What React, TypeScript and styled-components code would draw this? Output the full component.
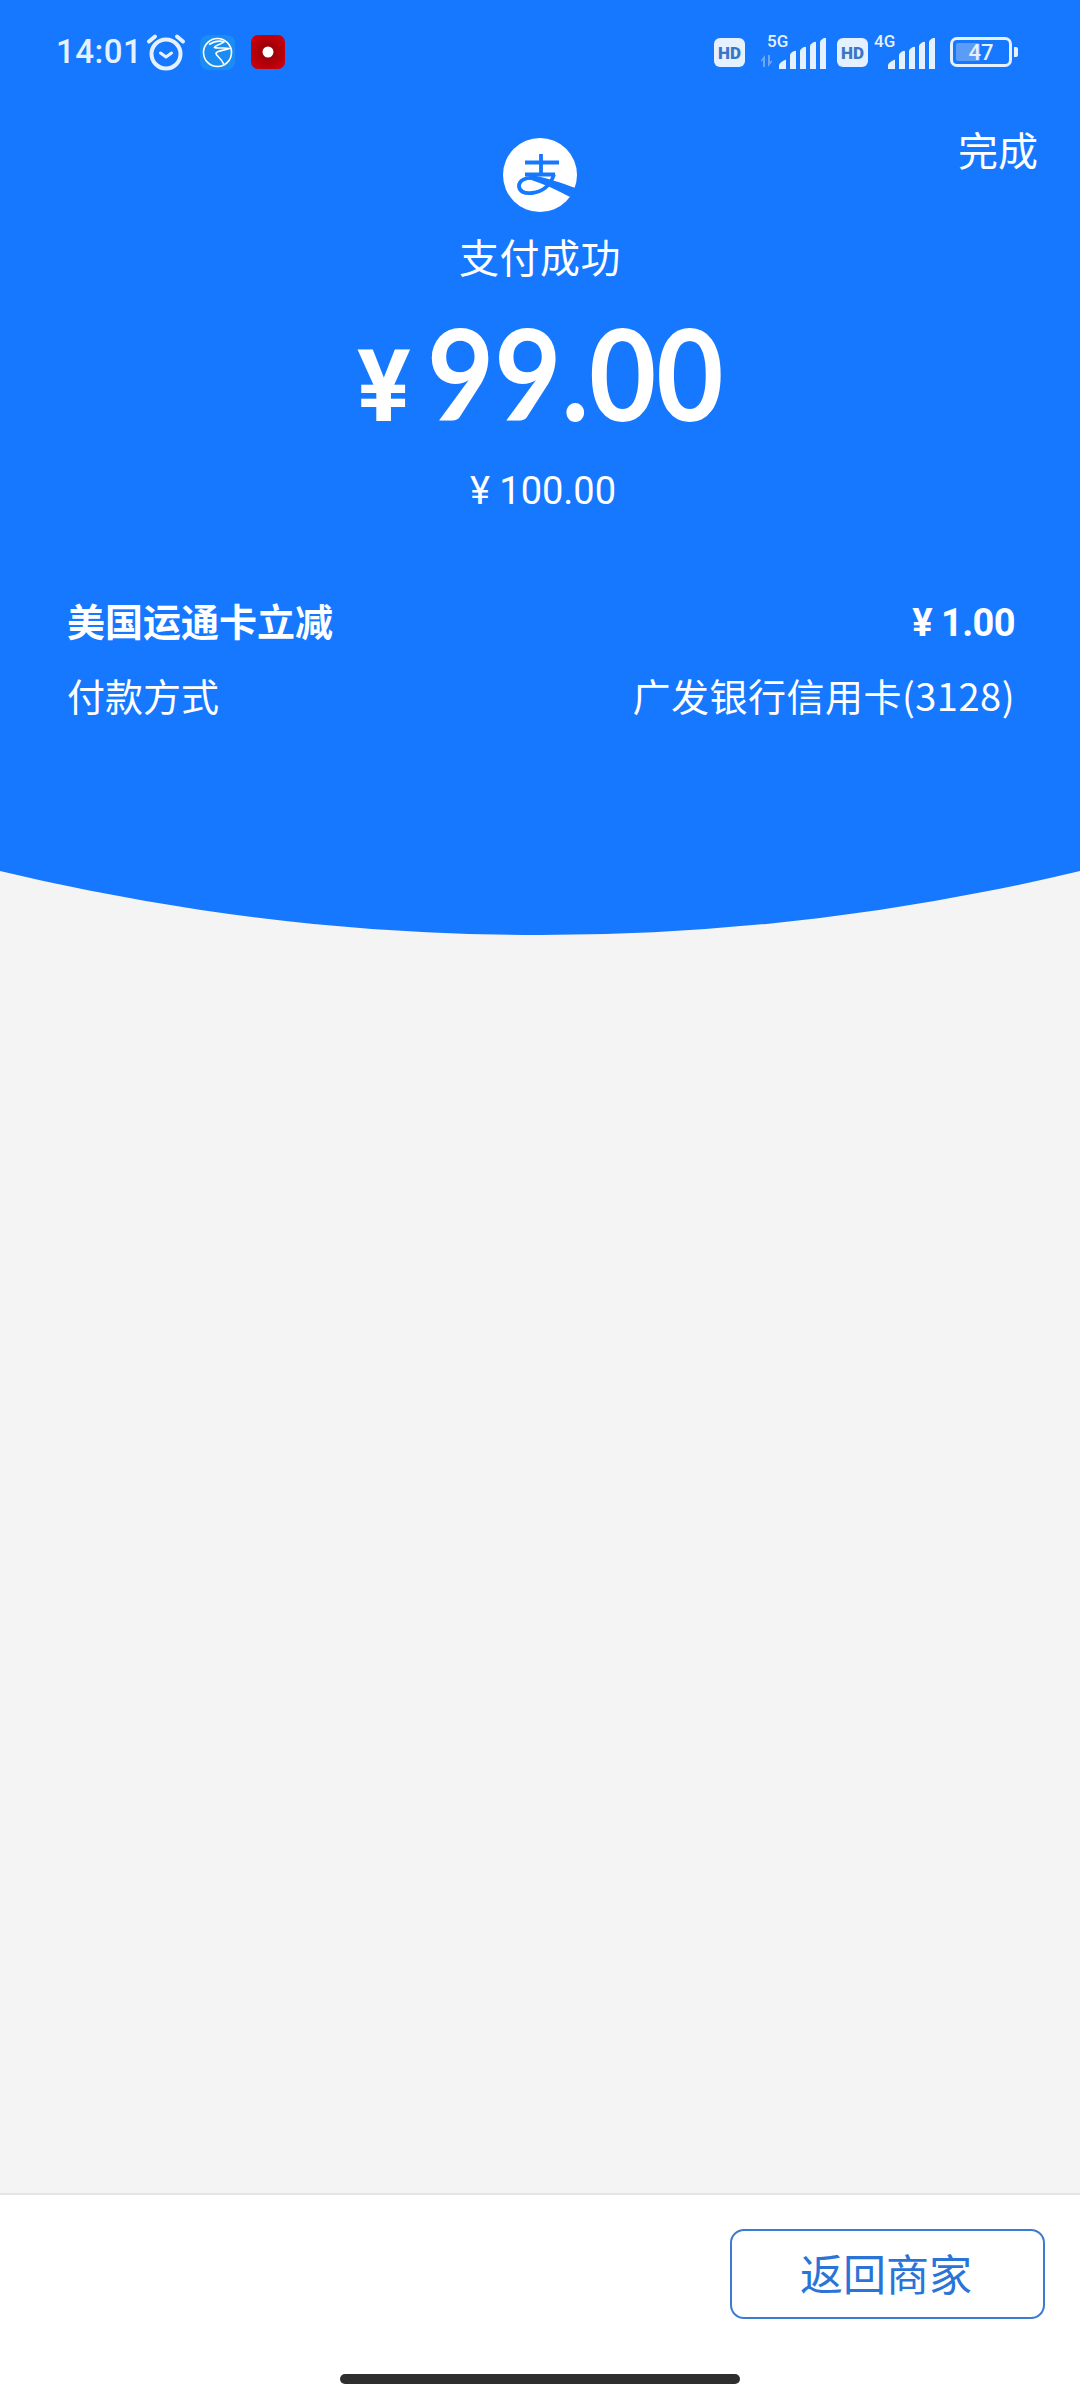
import React from 'react';
import styled, { createGlobalStyle } from 'styled-components';

const blue = '#1677ff';
const sans = `Roboto, "Noto Sans CJK SC", sans-serif`;
const cjk = `"Noto Sans CJK SC", sans-serif`;

const GlobalStyle = createGlobalStyle`
  html, body {
    margin: 0;
    padding: 0;
    background: #f4f4f4;
  }
  * {
    box-sizing: border-box;
  }
`;

const Page = styled.div`
  width: 1080px;
  height: 2400px;
  display: flex;
  flex-direction: column;
  background: #f4f4f4;
  overflow: hidden;
  font-family: ${sans};
  color: #fff;
`;

const Hero = styled.section`
  height: 935px;
  flex: none;
  display: flex;
  flex-direction: column;
  background: ${blue};
  clip-path: circle(2310px at 50% -1375px);
`;

const StatusBar = styled.div`
  height: 104px;
  flex: none;
  display: flex;
  align-items: center;
  justify-content: space-between;
  padding: 0 62px 0 56px;
`;

const StatusGroup = styled.div`
  display: flex;
  align-items: center;
`;

const Time = styled.span`
  font-size: 33px;
  line-height: 40px;
  font-weight: 500;
  letter-spacing: 0.5px;
  color: #e6f1ff;
  margin-right: 4px;
`;

const AppBadge = styled.span<{ $left?: number }>`
  display: flex;
  margin-left: ${(p) => p.$left ?? 0}px;
`;

const SignalWrap = styled.div<{ $left: number }>`
  position: relative;
  width: 66px;
  height: 34px;
  margin-left: ${(p) => p.$left}px;
`;

const NetLabel = styled.span<{ $x: number }>`
  position: absolute;
  left: ${(p) => p.$x}px;
  top: -3px;
  font-size: 17px;
  line-height: 18px;
  font-weight: 500;
  color: #e6f1ff;
`;

const Battery = styled.div`
  width: 62px;
  height: 30px;
  margin-left: 14px;
  border: 3px solid #e6f1ff;
  border-radius: 7px;
  padding: 3px;
  position: relative;
  display: flex;
`;

const BatteryFill = styled.div`
  height: 100%;
  border-radius: 2px;
  background: #5b9cf6;
`;

const BatteryText = styled.span`
  position: absolute;
  inset: 0;
  display: flex;
  align-items: center;
  justify-content: center;
  font-size: 22px;
  font-weight: 500;
  color: #e6f1ff;
`;

const BatteryTip = styled.div`
  width: 4px;
  height: 10px;
  margin-left: 2px;
  border-radius: 0 2px 2px 0;
  background: #e6f1ff;
`;

const TopRow = styled.div`
  display: grid;
  grid-template-columns: 1fr 74px 1fr;
  padding-top: 34px;
  align-items: start;
`;

const Logo = styled.svg`
  display: block;
  width: 74px;
  height: 74px;
`;

const Done = styled.span`
  justify-self: end;
  margin: -18px 42px 0 0;
  font-family: ${cjk};
  font-size: 40px;
  line-height: 58px;
`;

const Title = styled.div`
  margin-top: 15px;
  text-align: center;
  font-family: ${cjk};
  font-size: 40px;
  line-height: 58px;
  letter-spacing: 0.5px;
`;

const Amount = styled.div`
  margin-top: 32px;
  height: 112px;
  display: flex;
  justify-content: center;
  align-items: baseline;
  line-height: 112px;
`;

const AmountSign = styled.span`
  font-size: 100px;
  font-weight: 700;
  margin-right: 16px;
`;

const AmountValue = styled.span`
  font-family: Lato, sans-serif;
  font-size: 126px;
  font-weight: 700;
  transform: scaleX(0.92);
  transform-origin: left center;
  margin-right: -26px;
`;

const Original = styled.div`
  margin-top: 37px;
  padding-left: 6px;
  text-align: center;
  font-size: 38px;
  line-height: 50px;
`;

const Details = styled.div`
  margin-top: 81px;
  padding: 0 65px 0 67px;
  display: flex;
  flex-direction: column;
  gap: 18px;
`;

const DetailRow = styled.div<{ $strong?: boolean }>`
  display: flex;
  justify-content: space-between;
  align-items: center;
  font-family: ${(p) => (p.$strong ? sans : cjk)};
  font-size: 38px;
  line-height: 53px;
  font-weight: ${(p) => (p.$strong ? 700 : 400)};
`;

const Discount = styled.span`
  letter-spacing: -0.6px;
`;

const CardName = styled.span`
  letter-spacing: 0.5px;
`;

const Body = styled.main`
  flex: 1;
`;

const Footer = styled.footer`
  height: 207px;
  flex: none;
  display: flex;
  flex-direction: column;
  background: #fff;
  border-top: 2px solid #e4e4e4;
`;

const FooterActions = styled.div`
  display: flex;
  justify-content: flex-end;
  padding: 34px 35px 0 0;
`;

const BackButton = styled.button`
  width: 315px;
  height: 90px;
  padding: 0 3px 4px 0;
  background: #fff;
  border: 2px solid #3b7bd0;
  border-radius: 14px;
  color: #2a74d8;
  font-family: ${cjk};
  font-size: 43px;
`;

const HomeBar = styled.div`
  width: 400px;
  height: 10px;
  margin: 55px auto 0;
  border-radius: 5px;
  background: #2e2e2e;
`;

const ActivityArrows = styled.svg`
  position: absolute;
  left: 0;
  bottom: 2px;
`;

const BarsSlot = styled.span`
  position: absolute;
  right: 0;
  bottom: 0;
  display: flex;
`;

const Alarm = () => (
  <svg width="40" height="38" viewBox="0 0 40 38" fill="none" stroke="#e6f1ff" strokeLinecap="round" strokeLinejoin="round">
    <circle cx="20" cy="21" r="14.5" strokeWidth="4" />
    <path d="M14.5 20l5.500 4 5.500-4" strokeWidth="3" />
    <path d="M3 8.500L9 3.500M37 8.500L31 3.500" strokeWidth="4" />
  </svg>
);

const GlobeApp = () => (
  <svg width="35" height="35" viewBox="0 0 35 35" fill="none">
    <rect width="35" height="35" rx="8" fill="#1b8cf2" />
    <circle cx="17.500" cy="17.500" r="14" stroke="#fff" strokeWidth="1.600" />
    <path d="M9 9.500c5-3 11-4 15-2.500-3 2.500-9 3-9.500 5.500 3 1.500 8-.5 15 1-5 2-13 2-13.500 5 .5 3 5 4 8 11" stroke="#fff" strokeWidth="1.600" />
  </svg>
);

const RecordApp = () => (
  <svg width="34" height="34" viewBox="0 0 34 34">
    <defs>
      <radialGradient id="rec" cx="50%" cy="50%" r="70%">
        <stop offset="0%" stopColor="#8a0008" />
        <stop offset="100%" stopColor="#d8000c" />
      </radialGradient>
    </defs>
    <rect width="34" height="34" rx="7" fill="url(#rec)" />
    <circle cx="17" cy="17" r="5.500" fill="#fff" />
  </svg>
);

const HdBadge = () => (
  <svg width="31" height="29" viewBox="0 0 31 29">
    <rect width="31" height="29" rx="6" fill="#e6f1ff" />
    <text x="15.500" y="20.500" textAnchor="middle" fontFamily="Roboto, sans-serif" fontWeight="900" fontSize="17" fill="#3a76c8">HD</text>
  </svg>
);

const Bars = () => (
  <svg width="48" height="31" viewBox="0 0 48 31" fill="#e6f1ff">
    <path d="M0 31v-3.500q0-3 7-6v9.500zM11 31V17q0-2 3-3.500 3-1.500 3 0V31zM21 31V13q0-2 3-3.500 3-1.500 3 0V31zM31 31V8q0-2 3-3.500 3-1.500 3 0V31zM41 31V4q0-2 3-3.500 3-1.500 3 0V31z" />
  </svg>
);

const SignalGroup = ({ net, arrows, left }: { net: string; arrows?: boolean; left: number }) => (
  <SignalWrap $left={left}>
    <NetLabel $x={arrows ? 6 : 4}>{net}</NetLabel>
    {arrows && (
      <ActivityArrows width="15" height="12" viewBox="0 0 15 12" fill="#6fa5f2">
        <path d="M2 12V5L0 7V5l4-5v12zM9 0v7l2-2v2l-4 5V0z" />
      </ActivityArrows>
    )}
    <BarsSlot>
      <Bars />
    </BarsSlot>
  </SignalWrap>
);

const AlipayMark = () => (
  <Logo viewBox="0 0 74 74">
    <circle cx="37" cy="37" r="37" fill="#fff" />
    <g fill="none" stroke={blue} strokeWidth="3.800">
      <path d="M22 24.500h34M38 16v20M22 36.500h30" />
      <path d="M51 36.500c-3 9-10 17-22 18.500-8 1-13-2-13-7 0-6 8-9 14-8" />
    </g>
    <path d="M28 37c14 2 30 8 46 13.500l-7 8.500C54 52 41 46 27 41.500z" fill={blue} />
  </Logo>
);

export default function App() {
  return (
    <>
      <GlobalStyle />
      <Page>
        <Hero>
          <StatusBar>
            <StatusGroup>
              <Time>14:01</Time>
              <Alarm />
              <AppBadge $left={14}>
                <GlobeApp />
              </AppBadge>
              <AppBadge $left={16}>
                <RecordApp />
              </AppBadge>
            </StatusGroup>
            <StatusGroup>
              <HdBadge />
              <SignalGroup net="5G" arrows left={16} />
              <AppBadge $left={10}>
                <HdBadge />
              </AppBadge>
              <SignalGroup net="4G" left={2} />
              <Battery>
                <BatteryFill style={{ width: '47%' }} />
                <BatteryText>47</BatteryText>
              </Battery>
              <BatteryTip />
            </StatusGroup>
          </StatusBar>
          <TopRow>
            <span />
            <AlipayMark />
            <Done>完成</Done>
          </TopRow>
          <Title>支付成功</Title>
          <Amount>
            <AmountSign>¥</AmountSign>
            <AmountValue>99.00</AmountValue>
          </Amount>
          <Original>¥ 100.00</Original>
          <Details>
            <DetailRow $strong>
              <span>美国运通卡立减</span>
              <Discount>¥ 1.00</Discount>
            </DetailRow>
            <DetailRow>
              <span>付款方式</span>
              <CardName>广发银行信用卡(3128)</CardName>
            </DetailRow>
          </Details>
        </Hero>
        <Body />
        <Footer>
          <FooterActions>
            <BackButton>返回商家</BackButton>
          </FooterActions>
          <HomeBar />
        </Footer>
      </Page>
    </>
  );
}
